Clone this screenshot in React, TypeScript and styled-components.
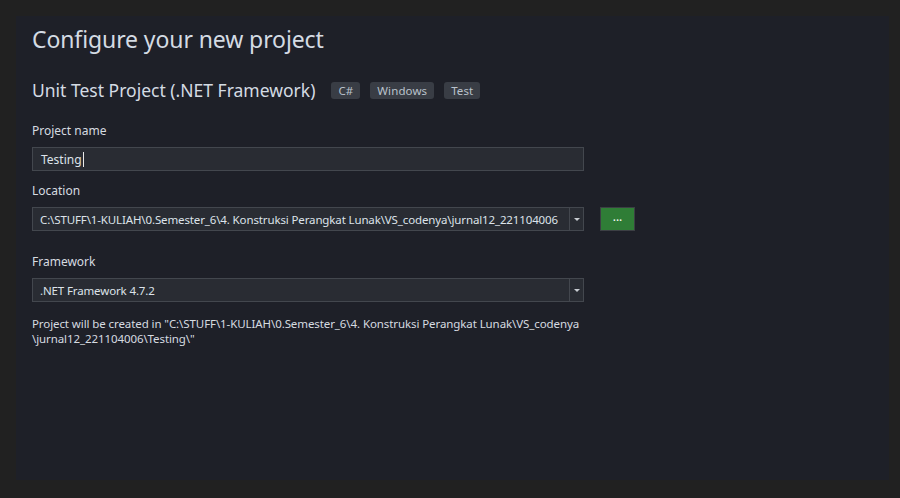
import React from "react";
import styled, { createGlobalStyle } from "styled-components";

const GlobalStyle = createGlobalStyle`
  html, body {
    margin: 0;
    padding: 0;
    background: #212121;
    font-family: "Segoe UI", "Noto Sans", "Open Sans", sans-serif;
  }
`;

const Screen = styled.div`
  width: 900px;
  height: 498px;
  padding: 16px 11px 18px 16px;
  box-sizing: border-box;
  background: #212121;
`;

const Panel = styled.main`
  height: 100%;
  background: #1e2028;
  padding: 8px 16px 0 16px;
  box-sizing: border-box;
`;

const Heading = styled.h1`
  margin: 0;
  font-size: 23px;
  font-weight: 400;
  line-height: 30px;
  color: #d4dbe3;
  letter-spacing: -0.1px;
`;

const TemplateRow = styled.div`
  display: flex;
  align-items: center;
  margin-top: 23px;
  height: 26px;
`;

const TemplateName = styled.h2`
  margin: 0 16px 0 0;
  font-size: 17.5px;
  font-weight: 400;
  color: #d4dbe3;
`;

const Tag = styled.span`
  display: inline-flex;
  align-items: center;
  justify-content: center;
  height: 17px;
  padding: 0 7px;
  margin-right: 10px;
  border-radius: 3px;
  background: #393d45;
  color: #b9c2cc;
  font-size: 11.5px;
  letter-spacing: 0.1px;
`;

const Field = styled.div<{ $top: number }>`
  margin-top: ${({ $top }) => $top}px;
`;

const Label = styled.label`
  display: block;
  font-size: 12px;
  line-height: 16px;
  color: #d6dbe0;
  margin-bottom: 8px;
`;

const Row = styled.div`
  display: flex;
  align-items: center;
  gap: 16px;
`;

const TextBox = styled.div`
  width: 552px;
  height: 24px;
  box-sizing: border-box;
  border: 1px solid #43474e;
  background: #292c33;
  display: flex;
  align-items: center;
  padding-left: 8px;
  font-size: 12px;
  color: #dde3ea;
`;

const Caret = styled.span`
  display: inline-block;
  width: 1px;
  height: 15px;
  background: #e8e8e8;
  margin-left: 1px;
`;

const Combo = styled.div`
  width: 552px;
  height: 24px;
  box-sizing: border-box;
  border: 1px solid #43474e;
  background: #292c33;
  display: flex;
  align-items: stretch;
  font-size: 11.5px;
  letter-spacing: -0.13px;
  color: #dde3ea;
`;

const ComboText = styled.div`
  flex: 1;
  display: flex;
  align-items: center;
  padding-left: 7px;
  white-space: nowrap;
  overflow: hidden;
`;

const ComboArrow = styled.div`
  width: 13px;
  border-left: 1px solid #43474e;
  display: flex;
  align-items: center;
  justify-content: center;
`;

const Arrow = styled.span`
  width: 0;
  height: 0;
  border-left: 3px solid transparent;
  border-right: 3px solid transparent;
  border-top: 3px solid #c8ccd2;
`;

const BrowseButton = styled.button`
  width: 35px;
  height: 24px;
  box-sizing: border-box;
  border: 1px solid #3c3f44;
  background: #2f7d36;
  color: #ffffff;
  font-family: inherit;
  font-size: 12px;
  line-height: 10px;
  padding: 0 0 4px 0;
`;

const Note = styled.p`
  margin: 14px 0 0 0;
  font-size: 11.5px;
  letter-spacing: -0.09px;
  line-height: 15px;
  color: #d6dbe0;
  white-space: nowrap;
`;

const location =
  "C:\\STUFF\\1-KULIAH\\0.Semester_6\\4. Konstruksi Perangkat Lunak\\VS_codenya\\jurnal12_221104006";

export default function App() {
  return (
    <Screen>
      <GlobalStyle />
      <Panel>
        <Heading>Configure your new project</Heading>
        <TemplateRow>
          <TemplateName>Unit Test Project (.NET Framework)</TemplateName>
          <Tag>C#</Tag>
          <Tag>Windows</Tag>
          <Tag>Test</Tag>
        </TemplateRow>

        <Field $top={20}>
          <Label>Project name</Label>
          <TextBox>
            Testing
            <Caret />
          </TextBox>
        </Field>

        <Field $top={12}>
          <Label>Location</Label>
          <Row>
            <Combo>
              <ComboText>{location}</ComboText>
              <ComboArrow>
                <Arrow />
              </ComboArrow>
            </Combo>
            <BrowseButton>...</BrowseButton>
          </Row>
        </Field>

        <Field $top={23}>
          <Label>Framework</Label>
          <Combo>
            <ComboText>.NET Framework 4.7.2</ComboText>
            <ComboArrow>
              <Arrow />
            </ComboArrow>
          </Combo>
        </Field>

        <Note>
          Project will be created in "C:\STUFF\1-KULIAH\0.Semester_6\4. Konstruksi Perangkat Lunak\VS_codenya
          <br />
          \jurnal12_221104006\Testing\"
        </Note>
      </Panel>
    </Screen>
  );
}
